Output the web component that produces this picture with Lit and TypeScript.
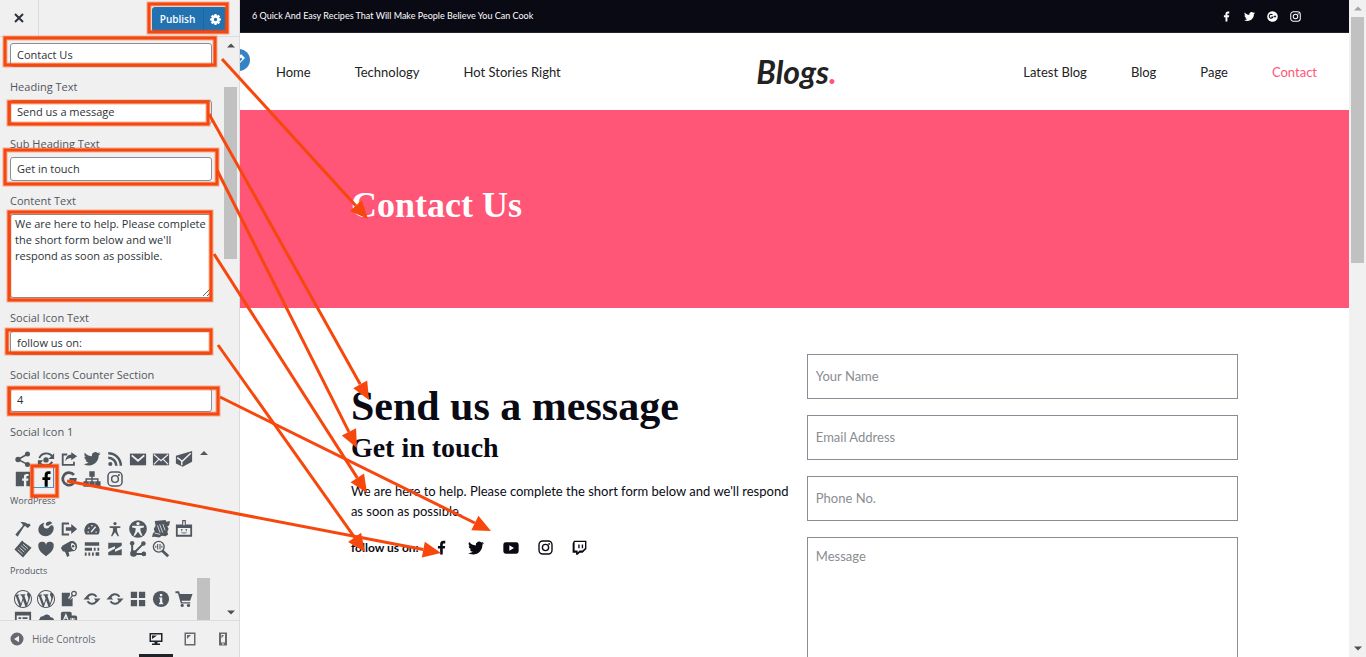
import { LitElement, html, css, svg } from "lit";
import { customElement } from "lit/decorators.js";
import { classMap } from "lit/directives/class-map.js";

const TWITTER = svg`<path d="M23.953 4.57a10 10 0 01-2.825.775 4.958 4.958 0 002.163-2.723c-.951.555-2.005.959-3.127 1.184a4.92 4.92 0 00-8.384 4.482C7.69 8.095 4.067 6.13 1.64 3.162a4.822 4.822 0 00-.666 2.475c0 1.71.87 3.213 2.188 4.096a4.904 4.904 0 01-2.228-.616v.06a4.923 4.923 0 003.946 4.827 4.996 4.996 0 01-2.212.085 4.936 4.936 0 004.604 3.417 9.867 9.867 0 01-6.102 2.105c-.39 0-.779-.023-1.17-.067a13.995 13.995 0 007.557 2.209c9.053 0 13.998-7.496 13.998-13.985 0-.21 0-.42-.015-.63A9.935 9.935 0 0024 4.59z"/>`;
const FACEBOOK = svg`<path d="M14 13.500h3.200l.8-4h-4v-2c0-1.400.5-2 2-2h2V1.300C17.500 1.200 16.500 1 15 1c-3.200 0-5.200 2-5.200 5.500v3H6.300v4h3.500V23H14z"/>`;
const INSTAGRAM = svg`<g fill="none" stroke="currentColor" stroke-width="2.2"><rect x="1.600" y="1.600" width="20.800" height="20.800" rx="6"/><circle cx="12" cy="12" r="5"/></g><circle cx="17.800" cy="6.200" r="1.500"/>`;
const YOUTUBE = svg`<path fill-rule="evenodd" d="M4 3.500h16a3.500 3.500 0 0 1 3.500 3.500v10a3.500 3.500 0 0 1-3.500 3.500H4A3.500 3.500 0 0 1 .5 17V7A3.500 3.500 0 0 1 4 3.500zM9.500 8v8l7-4z"/>`;
const TWITCH = svg`<path fill-rule="evenodd" d="M3 1h20v13.500l-6 6h-4.500L9 23.500H6.500v-3H1V5.500zM4.200 3.200v13.600H9v3l3-3h4.800l4-4V3.200zM10 7h2.200v6H10zm5.600 0h2.200v6h-2.200z"/>`;
const GPLUS = svg`<circle cx="12" cy="12" r="11.500"/><path d="M12 8.500A4.200 4.200 0 1 0 13 13H9.500" fill="none" stroke="#0a0a14" stroke-width="2.200"/><path d="M15 12h5M17.500 9.500v5" stroke="#0a0a14" stroke-width="1.800"/>`;

const WP = svg`<path d="M20 10c0-5.510-4.490-10-10-10C4.480 0 0 4.490 0 10c0 5.520 4.480 10 10 10 5.510 0 10-4.480 10-10zM7.780 15.370L4.370 6.220c.55-.02 1.170-.08 1.170-.08.5-.06.44-1.130-.06-1.110 0 0-1.450.11-2.370.11-.18 0-.37 0-.58-.01C4.120 2.690 6.870 1.110 10 1.110c2.330 0 4.450.87 6.050 2.340-.68-.11-1.650.39-1.650 1.580 0 .74.45 1.360.9 2.100.35.61.55 1.360.55 2.460 0 1.490-1.400 5-1.400 5l-3.030-8.370c.54-.02.82-.17.82-.17.5-.05.44-1.250-.06-1.220 0 0-1.440.12-2.380.12-.87 0-2.330-.12-2.330-.12-.5-.03-.56 1.200-.06 1.220l.92.08 1.260 3.410zM17.410 10c.24-.64.74-1.870.43-4.250.7 1.290 1.050 2.710 1.050 4.250 0 3.290-1.730 6.240-4.400 7.780.97-2.590 1.940-5.200 2.920-7.780zM6.100 18.090C3.120 16.650 1.110 13.530 1.110 10c0-1.300.23-2.480.72-3.590C3.250 10.300 4.670 14.200 6.100 18.090zm4.030-6.630l2.580 6.980c-.86.29-1.760.45-2.710.45-.79 0-1.570-.11-2.290-.33.81-2.380 1.620-4.740 2.420-7.100z"/>`;
const UPDATE = svg`<path d="M4.500 8.800A5.800 5.800 0 0 1 15 7.400M15.500 11.200A5.800 5.800 0 0 1 5 12.600" fill="none" stroke="currentColor" stroke-width="2.200"/><path d="M0.500 10.500h7.500L4.200 6.300zM19.500 9.500H12l3.800 4.200z"/>`;

interface Glyph { name: string; art: unknown; selected?: boolean; }

const SHARE_ROWS: Glyph[] = [
  { name: "Share", art: svg`<circle cx="15" cy="4.500" r="2.800"/><circle cx="4.500" cy="10.500" r="3"/><circle cx="15" cy="16" r="2.800"/><path d="M15 4.500l-10.500 6L15 16" fill="none" stroke="currentColor" stroke-width="1.800"/>` },
  { name: "Share alternate", art: svg`<circle cx="10" cy="11" r="3"/><path d="M2.500 9C5 3 13 2 17 7M17 13c-3 5-10 5.500-14 1.500" fill="none" stroke="currentColor" stroke-width="2"/><path d="M19 3.500V10h-6.500zM1 11.500h6L1 18z"/>` },
  { name: "Share external", art: svg`<path d="M8 5H3v11.500h12.500V13" fill="none" stroke="currentColor" stroke-width="2"/><path d="M12.500 2.500L19 7l-6.500 4.500V9C9.500 9 7.500 10 6 12.500 6.300 7.500 9 5.200 12.500 5z"/>` },
  { name: "Twitter", art: svg`<g transform="translate(.8 .5) scale(.77)">${TWITTER}</g>` },
  { name: "RSS", art: svg`<circle cx="4.800" cy="15.500" r="2.300"/><path d="M2.500 8.500a9 9 0 0 1 9 9M2.500 3.500a14 14 0 0 1 14 14" fill="none" stroke="currentColor" stroke-width="2.800"/>` },
  { name: "Email", art: svg`<path d="M1 4h18v13H1z"/><path d="M3 6l7 6 7-6" stroke="#f0f0f0" stroke-width="2" fill="none"/>` },
  { name: "Email alternate", art: svg`<path d="M1 4h18v13H1z"/><path d="M2 5l8 7 8-7M2 16l5.500-5.500M18 16l-5.500-5.500" stroke="#f0f0f0" stroke-width="1.300" fill="none"/>` },
  { name: "Email open", art: svg`<path d="M1 6.500L19 1v12L8.500 18.500 1 15z"/><path d="M2.500 8.500L8 12.500 17.500 3.500M7.500 13v4" stroke="#f0f0f0" stroke-width="1.600" fill="none"/>` },
  { name: "Facebook", art: svg`<path fill-rule="evenodd" d="M2 2h16v16h-4.300v-6h2l.4-2.500h-2.400V8c0-.8.4-1.200 1.200-1.200h1.300V4.500h-2C12 4.500 11 5.700 11 7.500v2H9V12h2v6H2z"/>` },
  { name: "Facebook letter", selected: true, art: svg`<path d="M8.500 18.500V11H6V8h2.500V5.800C8.500 3 10 1.500 12.500 1.500H15v3h-1.600c-1.200 0-1.500.5-1.500 1.500v2H15l-.4 3h-2.700v7.500z"/>` },
  { name: "Google", art: svg`<path d="M15.500 5.500A7 7 0 1 0 17 10.500h-6.500" fill="none" stroke="currentColor" stroke-width="3"/>` },
  { name: "Networking", art: svg`<path d="M7 1.500h6v6H7zM.5 12.500h6v6h-6zM7 12.500h6v6H7zM13.500 12.500h6v6h-6z"/><path d="M10 6v8M3.500 14v-4h13v4" fill="none" stroke="currentColor" stroke-width="1.600"/>` },
  { name: "Instagram", art: svg`<g transform="translate(1 1) scale(.75)">${INSTAGRAM}</g>` },
];

const WORDPRESS_ROWS: Glyph[] = [
  { name: "Hammer", art: svg`<path d="M7 2.500c4-1 6 .5 7.500 1.500l1 .5 1.500-.5 1.500 1.800-3 3-2-1-1-1.500-1.500 1.200L4 18.500 1.500 16l8.300-9.500C10 5 9 3.500 7 2.500z"/>` },
  { name: "Art", art: svg`<path d="M8.300 3.100C6 6 7.500 9.500 10.500 9.500c2.700 0 3-2.500 5-3.500 1.800-.8 3 .5 3 3 0 5-3.800 9-8.800 9C4.800 18 1.500 14.600 1.500 10.800c0-4 3-7 6.800-7.700z"/><path d="M11 2.500c2-1.500 5-1 6 1-2 .2-3.500 3-5.500 3-2 0-2.300-2.500-.5-4z"/>` },
  { name: "Migrate", art: svg`<path d="M10 4H3v12h7" fill="none" stroke="currentColor" stroke-width="2.200"/><path d="M6.500 8h6V4.500L19 10l-6.500 5.500V12h-6z"/>` },
  { name: "Performance", art: svg`<path d="M10 3a8.300 8.300 0 0 0-7 13h14A8.300 8.300 0 0 0 10 3z"/><path d="M9 13.500l5-6M5 13.500h1.500M13.800 13.500h1.500M6 8.500l1 1M10 5.500v1.500" stroke="#f0f0f0" stroke-width="1.600"/>` },
  { name: "Accessibility", art: svg`<circle cx="10" cy="4" r="1.800"/><path d="M4 7h12v1.500l-4 .8.5 3.700 2 5H13l-3-4.500L7 18H5.500l2-5 .5-3.700-4-.8z"/>` },
  { name: "Accessibility alternate", art: svg`<circle cx="10" cy="10" r="9.800"/><g fill="#f0f0f0"><circle cx="10" cy="4" r="1.900"/><path d="M3.500 6.500h13V8.300l-4 .9.5 3.500 2 4.800h-1.700L10 13l-3.300 4.500H5l2-4.800.5-3.500-4-.9z"/></g>` },
  { name: "Tickets", art: svg`<path d="M3 1l12-1 1 2 4-1-1 5-2 1 1.500 3-1.500 3 1 3-3 2-4-.5-3 2-5-1-3 .5 1-4 2-2L2 10l2-4z"/><path d="M6 6l3 8M8.500 5l3.500 9M12 4.500l2.500 7M3 14.500l6 1.500" stroke="#f0f0f0" stroke-width=".9"/>` },
  { name: "Name tag", art: svg`<path fill-rule="evenodd" d="M8 0h4v5h7v13.500H1V5h7zM9.200 1.300v4.500h1.600V1.300zM3 9v7.500h14V9z"/><circle cx="7.500" cy="11" r=".9"/><circle cx="12.500" cy="11" r=".9"/><path d="M7 13.500c1.500 1.400 4.500 1.400 6 0" fill="none" stroke="currentColor"/>` },
  { name: "Clipboard", art: svg`<path d="M9 .5L11 2.500l8.500 6-9.500 11L.5 10.500z"/><path d="M4 10.500l5.500 5M6 8.500l5.500 5M8 6.500l5.500 5M10 4.800l5.500 4.700" stroke="#f0f0f0" stroke-width=".9"/>` },
  { name: "Heart", art: svg`<path d="M10 18C4 14 1.500 10.500 1.500 7A4.300 4.300 0 0 1 10 5.500 4.300 4.300 0 0 1 18.500 7C18.500 10.500 16 14 10 18z"/>` },
  { name: "Megaphone", art: svg`<path fill-rule="evenodd" d="M11.500 1.500c4-1.500 7.500 2 7.500 6 0 3-2.500 5.300-5.300 5l-4.200.7 1 4.300-2.500 1.500L5.500 13 3 12.500 1 9l2-3zM13 3.300c-2 2.700 0 7.500 3 8 2.500-3 1-7.500-3-8z"/><circle cx="14.500" cy="7" r="1.400"/>` },
  { name: "Schedule", art: svg`<path d="M2 2.500h16v4H2zM2 8.500h8v3.500H2zM12 8.500h2V12h-2zM16 8.500h2V12h-2zM2 14h2v3.500H2zM6 14h2v3.500H6zM10 14h2v3.500h-2zM14 13.500h4v4h-4z"/>` },
  { name: "Tide", art: svg`<path d="M2.500 3h15v3.500L10 10.500V7l-7.500 3zM17.500 17h-15v-3.500l7.500-4V13l7.500-3z"/>` },
  { name: "Rest API", art: svg`<circle cx="3.500" cy="3.500" r="2.500"/><circle cx="16" cy="4" r="2.500"/><circle cx="5" cy="15" r="3.700"/><circle cx="16.500" cy="15.500" r="2.600"/><path d="M3.500 4v11M16 4L5.500 14.500M6 15.500h10" stroke="currentColor" stroke-width="2.200"/>` },
  { name: "Code search", art: svg`<circle cx="7.500" cy="7.500" r="6" fill="none" stroke="currentColor" stroke-width="1.500"/><path d="M11.500 12l6.500 6" stroke="currentColor" stroke-width="3.200"/><path d="M6.300 4.500v6M8.900 4.500v6M4.200 6.500v2M11 6.500v2" stroke="currentColor" stroke-width="1.200"/>` },
];

const PRODUCT_ROWS: Glyph[] = [
  { name: "WordPress", art: WP },
  { name: "WordPress alternate", art: WP },
  { name: "Press this", art: svg`<path d="M2 3h9v3l-2 3 2 2 3-2.500V18H2z"/><circle cx="15.500" cy="4" r="2.500" fill="none" stroke="currentColor" stroke-width="1.400"/><path d="M14 6l-5 6" stroke="currentColor" stroke-width="1.400"/>` },
  { name: "Update", art: UPDATE },
  { name: "Update alternate", art: UPDATE },
  { name: "Screen options", art: svg`<path d="M2 2h7v7H2zM11 2h7v7h-7zM2 11h7v7H2zM11 11h7v7h-7z"/>` },
  { name: "Info", art: svg`<circle cx="10" cy="10" r="9"/><path d="M8.800 4.500h2.600V7H8.800zM8 8.300h3.400v6h1v1.500H7.800v-1.500h1V9.800H8z" fill="#f0f0f0"/>` },
  { name: "Cart", art: svg`<path d="M.5 1.500h4l1 3H19.500L16.800 12H7.300l.5 1.500H17V15H6.500L3.300 3.500H.5z"/><circle cx="8" cy="17.200" r="1.800"/><circle cx="15" cy="17.200" r="1.800"/>` },
  { name: "Feedback", art: svg`<path fill-rule="evenodd" d="M1 2h18v16H1zM3 6v10.500h14V6z"/><path d="M5 8h3v2H5zM9.500 8H15v2H9.500z"/>` },
  { name: "Cloud", art: svg`<path d="M3 10c0-2 2-3.500 4-3A4.500 4.500 0 0 1 15 8c3 0 4.500 2.500 4 5s-2 4-4 4H4c-3-1-4-5-1-7z"/>` },
  { name: "Translation", art: svg`<path d="M3 2h8a2 2 0 0 1 2 2v2h4a2 2 0 0 1 2 2v9H8v-4H1V4a2 2 0 0 1 2-2z"/><path d="M4 11l2.500-6L9 11M5 9h3M11 10h6M14 9v4" stroke="#f0f0f0" stroke-width="1.300" fill="none"/>` },
];

const ARROWS = [
  [222, 59, 368, 219], [209, 114, 369, 400], [217, 170, 357, 448], [214, 254, 367, 493],
  [218, 345, 365, 552], [220, 397, 491, 531], [67, 481, 441, 553],
];
const FRAMES = [
  [149, 4, 78, 28], [5, 38, 210, 27], [9, 102, 199, 22], [5, 150, 212, 34],
  [9, 212, 202, 88], [7, 330, 204, 23], [9, 388, 209, 26], [32, 466, 25, 30],
];

@customElement("customizer-panel")
class CustomizerPanel extends LitElement {
  static styles = css`
    :host { display: flex; flex-direction: column; box-sizing: border-box; min-height: 0; background: #f0f0f0; border-right: 1px solid #dcdcde; color: #50575e; font: 11px/16px "Open Sans", "Noto Sans", sans-serif; }
    * { box-sizing: border-box; }
    svg { display: block; fill: currentColor; }
    button { font: inherit; color: inherit; background: none; border: 0; padding: 0; margin: 0; cursor: pointer; }
    .head { flex: none; display: flex; align-items: stretch; height: 37px; border-bottom: 1px solid #dcdcde; }
    .close { width: 39px; display: grid; place-items: center; border-right: 1px solid #dcdcde; color: #2c3338; }
    .actions { flex: 1; display: flex; justify-content: flex-end; align-items: center; padding: 2px 12px 0 0; color: #fff; }
    .publish { width: 51px; height: 25px; background: #2271b1; border-radius: 3px 0 0 3px; font-size: 10px; font-weight: 600; }
    .gear { width: 24px; height: 25px; display: grid; place-items: center; background: #2271b1; border-left: 1px solid #1d66a1; border-radius: 0 3px 3px 0; }
    .body { flex: 1; min-height: 0; display: flex; overflow: hidden; }
    .fields { flex: 1; min-width: 0; padding: 6px 11px 0 10px; overflow: hidden; }
    .field { display: flex; flex-direction: column; gap: 5px; margin-bottom: 12px; }
    .label { font-weight: 500; color: #50575e; }
    .text { width: 100%; height: 24px; padding: 0 6px 2px; border: 1px solid #8c8f94; border-radius: 3px; background: #fff; color: #2c3338; font: inherit; }
    .area { width: 100%; height: 84px; padding: 1px 0 2px 4px; border: 1px solid #8c8f94; border-radius: 3px; background: #fff; color: #2c3338; font: inherit; resize: vertical; display: block; overflow: hidden; }
    .picker { display: flex; margin-top: 9px; }
    .sets { flex: 1; min-width: 0; }
    .set { display: grid; grid-template-columns: repeat(8, 20px); column-gap: 3px; padding-left: 3px; }
    .set-name { margin: 4px 0 10px; font-size: 9px; font-weight: 400; line-height: 16px; }
    .glyph { width: 20px; height: 20px; padding: 1px; position: relative; }
    .selected { color: #000; }
    .selected::before { content: ""; position: absolute; left: -4px; top: -3px; width: 20px; height: 20px; border: 1px solid #4a90c9; }
    .picker-bar { width: 15px; height: 171px; display: flex; flex-direction: column; justify-content: space-between; align-items: center; padding-right: 2px; }
    .picker-thumb { width: 13px; height: 42px; background: #c1c1c1; }
    .bar { width: 16px; display: flex; flex-direction: column; align-items: center; padding: 6px 1px 5px 0; color: #505050; }
    .thumb { width: 13px; height: 172px; margin-top: 39px; background: #c1c1c1; }
    .down { margin-top: auto; }
    .foot { flex: none; height: 37px; display: flex; align-items: stretch; padding-right: 0; border-top: 1px solid #dcdcde; }
    .collapse { flex: 1; display: flex; align-items: center; gap: 8px; padding-left: 10px; font-size: 10px; color: #646970; }
    .device { width: 33px; display: grid; place-items: center; padding-top: 2px; border-bottom: 3px solid transparent; color: #646970; }
    .active { width: 34px; border-bottom-color: #1d2327; color: #1d2327; }
  `;

  private set(items: Glyph[]) {
    return html`<div class="set">${items.map((g) => html`
      <button class=${classMap({ glyph: true, selected: !!g.selected })} aria-label=${g.name}>
        <svg width="18" height="18" viewBox="0 0 20 20">${g.art}</svg>
      </button>`)}</div>`;
  }

  private field(id: string, label: string, value: string) {
    return html`<div class="field">
      ${label ? html`<label class="label" for=${id}>${label}</label>` : ""}
      <input class="text" id=${id} aria-label=${label || "Title"} .value=${value} />
    </div>`;
  }

  render() {
    return html`
      <div class="head">
        <button class="close" aria-label="Close"><svg width="10" height="10" viewBox="0 0 10 10"><path d="M1 1l8 8M9 1L1 9" stroke="currentColor" stroke-width="2"/></svg></button>
        <div class="actions">
          <button class="publish">Publish</button>
          <button class="gear" aria-label="Publish settings"><svg width="11" height="11" viewBox="0 0 20 20"><circle cx="10" cy="10" r="5.500" fill="none" stroke="currentColor" stroke-width="5"/><path d="M10 0v4M10 16v4M0 10h4M16 10h4M3 3l3 3M14 14l3 3M17 3l-3 3M6 14l-3 3" stroke="currentColor" stroke-width="4"/></svg></button>
        </div>
      </div>
      <div class="body">
        <div class="fields">
          ${this.field("title", "", "Contact Us")}
          ${this.field("heading", "Heading Text", "Send us a message")}
          ${this.field("sub", "Sub Heading Text", "Get in touch")}
          <div class="field">
            <label class="label" for="content">Content Text</label>
            <textarea class="area" id="content" .value=${"We are here to help. Please complete the short form below and we'll respond as soon as possible."}></textarea>
          </div>
          ${this.field("social", "Social Icon Text", "follow us on:")}
          ${this.field("counter", "Social Icons Counter Section", "4")}
          <div class="label">Social Icon 1</div>
          <div class="picker">
            <div class="sets">
              ${this.set(SHARE_ROWS)}
              <div class="set-name">WordPress</div>
              ${this.set(WORDPRESS_ROWS)}
              <div class="set-name">Products</div>
              ${this.set(PRODUCT_ROWS)}
            </div>
            <div class="picker-bar">
              <svg width="8" height="8" viewBox="0 0 8 8"><path d="M0 6l4-4 4 4z"/></svg>
              <div class="picker-thumb"></div>
            </div>
          </div>
        </div>
        <div class="bar">
          <svg width="8" height="5" viewBox="0 0 8 5"><path d="M0 4.500L4 .5l4 4z"/></svg>
          <div class="thumb"></div>
          <svg class="down" width="8" height="5" viewBox="0 0 8 5"><path d="M0 .5h8l-4 4z"/></svg>
        </div>
      </div>
      <div class="foot">
        <button class="collapse"><svg width="14" height="14" viewBox="0 0 14 14"><path fill-rule="evenodd" d="M7 .5a6.500 6.500 0 1 0 0 13 6.500 6.500 0 0 0 0-13zM9 3.800v6.400L4 7z"/></svg>Hide Controls</button>
        <button class="device active" aria-label="Desktop"><svg width="14" height="14" viewBox="0 0 14 14"><path fill-rule="evenodd" d="M.5 1h13v9H8.500v1.500H11V13H3v-1.500h2.500V10h-5zM2 2.500v6h10v-6z"/><path d="M3 3.500h5l-5 3.500z"/></svg></button>
        <button class="device" aria-label="Tablet"><svg width="14" height="14" viewBox="0 0 14 14"><path fill-rule="evenodd" d="M1.500 .5h11v13h-11zM3 2v10h8V2z"/><path d="M4 3h4L4 7z"/></svg></button>
        <button class="device" aria-label="Mobile"><svg width="14" height="14" viewBox="0 0 14 14"><path fill-rule="evenodd" d="M3 .5h8v13H3zM5 2v8.500h4V2zM6 11.500v1h2v-1z"/><path d="M5.500 3H8L5.500 6.500z"/></svg></button>
      </div>`;
  }
}

@customElement("site-preview")
class SitePreview extends LitElement {
  static styles = css`
    :host { display: flex; min-width: 0; min-height: 0; overflow: hidden; background: #fff; color: #222; font: 13px/20px Lato, "Open Sans", sans-serif; }
    * { box-sizing: border-box; }
    svg { display: block; fill: currentColor; }
    a { color: inherit; text-decoration: none; }
    .page { flex: 1; min-width: 0; overflow: hidden; position: relative; }
    .top { height: 33px; display: flex; align-items: center; justify-content: space-between; padding: 0 48px 0 12px; background: #0a0a14; border-bottom: 1px solid #22222c; color: #fff; font-size: 9px; }
    .top-icons { display: flex; gap: 12px; }
    .edit { position: absolute; left: -12px; top: 49px; width: 22px; height: 22px; padding: 4px; border: 0; border-radius: 50%; background: #3582c4; color: #fff; }
    .nav { height: 77px; display: grid; grid-template-columns: 1fr auto 1fr; align-items: center; padding: 0 32px 0 36px; }
    .links { display: flex; gap: 44px; white-space: nowrap; }
    .end { justify-content: flex-end; }
    .current { color: #ff5576; }
    .logo { font: italic 700 32px/44px "Liberation Sans Narrow", Lato, sans-serif; color: #222; }
    .dot { color: #ff5576; }
    .hero { height: 198px; display: flex; align-items: center; background: #ff5576; color: #fff; }
    .wrap { width: 80%; margin: 0 auto; }
    .title { margin: 0; padding-bottom: 8px; font: 700 36px/40px "Liberation Serif", serif; }
    .contact { display: grid; grid-template-columns: 51fr 50fr; gap: 16px; padding-top: 46px; color: #0a0a14; }
    .intro { padding-top: 27px; }
    .lead { margin: 0; font: 700 42px/50px "Liberation Serif", serif; }
    .sub { margin: 0; font: 700 28px/34px "Liberation Serif", serif; }
    .copy { margin: 16px 0 0; }
    .follow { display: flex; align-items: center; gap: 15px; height: 24px; margin-top: 15px; font-weight: 700; font-size: 12px; }
    .icons { display: flex; gap: 19px; }
    .form { display: flex; flex-direction: column; gap: 16px; }
    .entry { width: 100%; height: 45px; padding: 0 8px 2px; border: 1px solid #8a8d95; border-radius: 0; background: #fff; font: inherit; color: #222; }
    .message { height: 180px; padding: 8px; resize: none; }
    .entry::placeholder { color: #8a8d92; opacity: 1; }
    .bar { flex: none; width: 17px; display: flex; flex-direction: column; align-items: center; padding: 6px 0; background: #f1f1f1; color: #505050; }
    .up { color: #a3a3a3; }
    .thumb { width: 13px; height: 246px; margin-top: 6px; background: #c1c1c1; }
    .down { margin-top: auto; }
  `;

  private icon(label: string, art: unknown, size: number) {
    return html`<a href="#" aria-label=${label}><svg width=${size} height=${size} viewBox="0 0 24 24">${art}</svg></a>`;
  }

  render() {
    return html`
      <div class="page">
        <div class="top">
          <span>6 Quick And Easy Recipes That Will Make People Believe You Can Cook</span>
          <div class="top-icons">
            ${this.icon("Facebook", FACEBOOK, 11)}${this.icon("Twitter", TWITTER, 11)}${this.icon("Google Plus", GPLUS, 11)}${this.icon("Instagram", INSTAGRAM, 11)}
          </div>
        </div>
        <button class="edit" aria-label="Edit"><svg width="14" height="14" viewBox="0 0 14 14"><path fill-rule="evenodd" d="M9 1l4 4-6.500 6.500L2 13l1-4.500zM9 4.500L6.500 7 8 8.500 10.500 6z"/></svg></button>
        <nav class="nav">
          <div class="links"><a href="#">Home</a><a href="#">Technology</a><a href="#">Hot Stories Right</a></div>
          <a class="logo" href="#">Blogs<span class="dot">.</span></a>
          <div class="links end"><a href="#">Latest Blog</a><a href="#">Blog</a><a href="#">Page</a><a class="current" href="#">Contact</a></div>
        </nav>
        <div class="hero"><div class="wrap"><h1 class="title">Contact Us</h1></div></div>
        <section class="wrap contact">
          <div class="intro">
            <h2 class="lead">Send us a message</h2>
            <h3 class="sub">Get in touch</h3>
            <p class="copy">We are here to help. Please complete the short form below and we'll respond as soon as possible.</p>
            <div class="follow">
              <span>follow us on:</span>
              <div class="icons">
                ${this.icon("Facebook", FACEBOOK, 15)}${this.icon("Twitter", TWITTER, 16)}${this.icon("YouTube", YOUTUBE, 16)}${this.icon("Instagram", INSTAGRAM, 15)}${this.icon("Twitch", TWITCH, 15)}
              </div>
            </div>
          </div>
          <form class="form">
            <input class="entry" aria-label="Your Name" placeholder="Your Name" />
            <input class="entry" type="email" aria-label="Email Address" placeholder="Email Address" />
            <input class="entry" type="tel" aria-label="Phone No." placeholder="Phone No." />
            <textarea class="entry message" aria-label="Message" placeholder="Message"></textarea>
          </form>
        </section>
      </div>
      <div class="bar">
        <svg class="up" width="8" height="5" viewBox="0 0 8 5"><path d="M0 4.500L4 .5l4 4z"/></svg>
        <div class="thumb"></div>
        <svg class="down" width="8" height="5" viewBox="0 0 8 5"><path d="M0 .5h8l-4 4z"/></svg>
      </div>`;
  }
}

@customElement("app-root")
class AppRoot extends LitElement {
  static styles = css`
    :host { display: grid; grid-template-columns: 240px 1fr; grid-template-rows: 100vh; position: relative; overflow: hidden; }
    .notes { position: absolute; left: 0; top: 0; width: 100%; height: 100%; pointer-events: none; }
  `;

  render() {
    return html`
      <customizer-panel></customizer-panel>
      <site-preview></site-preview>
      <svg class="notes" fill="none" stroke="#f7470c">
        ${FRAMES.map(([x, y, w, h]) => svg`
          <rect x=${x} y=${y} width=${w} height=${h} stroke-width="5" stroke-opacity=".4"/>
          <rect x=${x} y=${y} width=${w} height=${h} stroke-width="3"/>`)}
        ${ARROWS.map(([x1, y1, x2, y2]) => {
          const len = Math.hypot(x2 - x1, y2 - y1);
          const ux = (x2 - x1) / len, uy = (y2 - y1) / len;
          const bx = x2 - ux * 18, by = y2 - uy * 18;
          return svg`<path d=${`M${x1} ${y1}L${bx} ${by}`} stroke-width="3"/>
            <path d=${`M${x2} ${y2}L${bx - uy * 8} ${by + ux * 8}L${bx + uy * 8} ${by - ux * 8}z`} fill="#f7470c" stroke="none"/>`;
        })}
      </svg>`;
  }
}
